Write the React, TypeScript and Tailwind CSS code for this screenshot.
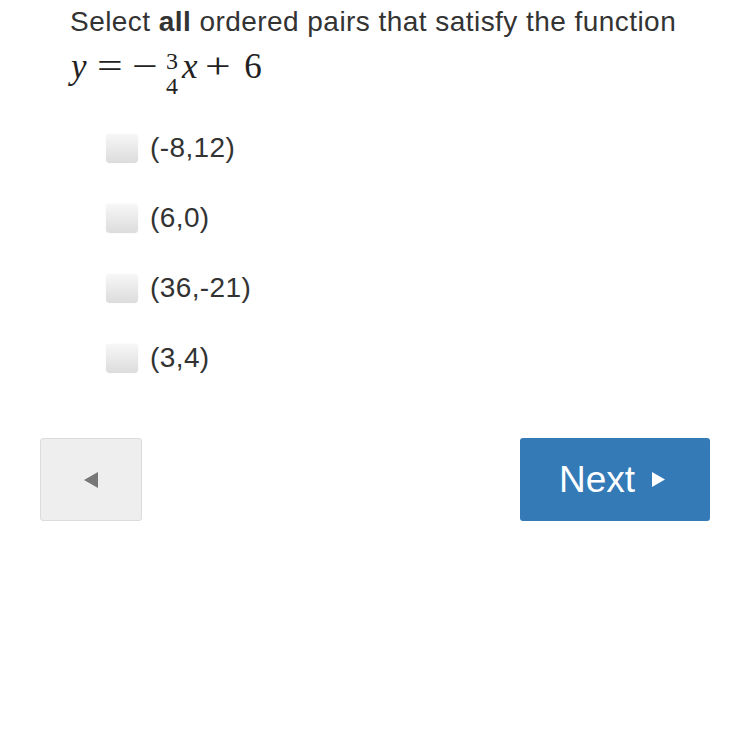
import React from "react";

const sans = { fontFamily: '"Liberation Sans", Arial, sans-serif' };
const serif = { fontFamily: '"Liberation Serif", "DejaVu Serif", serif' };

function Option({ label }: { label: string }) {
  return (
    <div className="flex items-center h-[70px]">
      <div className="w-[32px] h-[29px] rounded-[4px] bg-gradient-to-b from-[#f7f7f7] to-[#dcdcdc] shadow-[0_0_1px_rgba(0,0,0,0.15)]" />
      <span className="ml-[12px] text-[28px] tracking-[0.4px] text-[#333]" style={sans}>{label}</span>
    </div>
  );
}

export default function App() {
  return (
    <div className="w-[750px] h-[750px] bg-white relative" style={sans}>
      <div className="pl-[70px] pt-[4px]">
        <div className="text-[28px] leading-[36px] text-[#333] tracking-[0.45px]">
          Select <b>all</b> ordered pairs that satisfy the function
        </div>
        <div className="flex items-center h-[54px] text-[35px] text-[#222] ml-[1px]" style={serif}>
          <span className="italic">y</span>
          <span className="ml-[13px] inline-block scale-x-[1.3]">=</span>
          <span className="ml-[16px] inline-block scale-x-[1.3]">−</span>
          <span className="inline-flex flex-col items-center w-[14px] ml-[10px] text-[24px] leading-[20px] mt-[12px]">
            <span>3</span>
            <span className="w-[14px] h-[5px]" />
            <span>4</span>
          </span>
          <span className="italic ml-[3px]">x</span>
          <span className="ml-[10px] inline-block scale-x-[1.3]">+</span>
          <span className="ml-[17px]">6</span>
        </div>
      </div>
      <div className="pl-[106px] mt-[19px]">
        <Option label="(-8,12)" />
        <Option label="(6,0)" />
        <Option label="(36,-21)" />
        <Option label="(3,4)" />
      </div>
      <div className="flex justify-between px-[40px] mt-[45px]">
        <button className="w-[102px] h-[83px] bg-[#eeeeee] border border-[#dcdcdc] rounded-[3px] flex items-center justify-center">
          <svg width="14" height="16" viewBox="0 0 14 16"><path d="M0 8 L14 0 L14 16 Z" fill="#777" /></svg>
        </button>
        <button className="w-[190px] h-[83px] bg-[#337ab7] rounded-[3px] flex items-center justify-center pr-[6px] text-white text-[37px]" style={sans}>
          <span>Next</span>
          <svg className="ml-[17px]" width="13" height="15" viewBox="0 0 13 15"><path d="M0 0 L13 7.5 L0 15 Z" fill="#fff" /></svg>
        </button>
      </div>
    </div>
  );
}
